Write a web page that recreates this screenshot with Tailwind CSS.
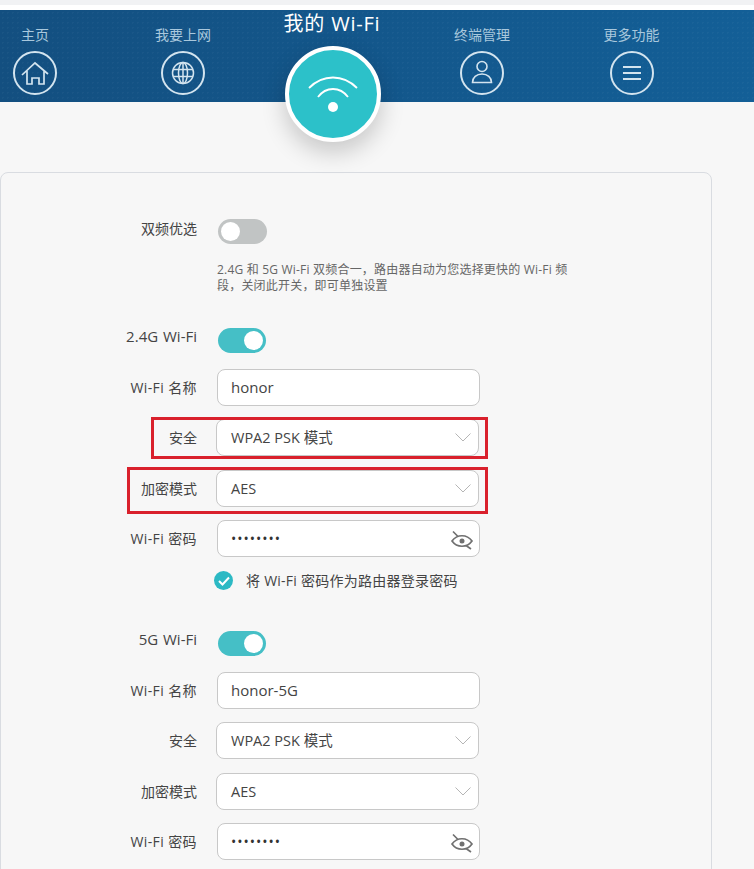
<!DOCTYPE html>
<html lang="zh-CN">
<head>
    <meta charset="UTF-8">
    <meta name="viewport" content="width=device-width, initial-scale=1.0">
    <title>我的 Wi-Fi</title>
    <script src="https://cdn.jsdelivr.net/npm/@tailwindcss/browser@4"></script>
</head>
<body class="bg-[#f7f7f7] h-[869px] overflow-hidden font-['Open_Sans','Noto_Sans_CJK_SC',sans-serif] text-[#333]">
    <div class="h-[5px] bg-[#f1f2f4]"></div>
    <div class="h-[5px] bg-white"></div>

    <!-- Top nav -->
    <header class="relative h-[92px] bg-gradient-to-r from-[#134f80] to-[#135f97]">
        <div class="absolute inset-0 bg-[radial-gradient(rgba(255,255,255,0.03)_1px,transparent_1px)] bg-[size:5px_5px]"></div>
        <nav class="relative flex -ml-[39px] text-[14px] text-[#a9c8dd]">
            <a class="w-[148px] flex flex-col items-center pt-[15px]">
                <span class="leading-[20px]">主页</span>
                <span class="mt-[6px] w-[44px] h-[44px] rounded-full border-2 border-[#d3e4ef] flex items-center justify-center">
                    <svg width="28" height="28" viewBox="0 0 28 28" fill="none" stroke="#d3e4ef" stroke-width="1.7"><path d="M1 16 14 4l13 11M6 12v13h5v-6h7v6h5V12"/></svg>
                </span>
            </a>
            <a class="w-[148px] flex flex-col items-center pt-[15px]">
                <span class="leading-[20px]">我要上网</span>
                <span class="mt-[6px] w-[44px] h-[44px] rounded-full border-2 border-[#d3e4ef] flex items-center justify-center">
                    <svg width="24" height="24" viewBox="0 0 24 24" fill="none" stroke="#d3e4ef" stroke-width="1.5"><circle cx="12" cy="12" r="10.5"/><ellipse cx="12" cy="12" rx="4.5" ry="10.5"/><path d="M12 1.500v21M2 8.500h20M2 15.500h20"/></svg>
                </span>
            </a>
            <a class="w-[150px] flex flex-col items-center">
                <span class="text-[20px] leading-[28px] text-white tracking-[0.8px]">我的 Wi-Fi</span>
            </a>
            <a class="w-[150px] flex flex-col items-center pt-[15px]">
                <span class="leading-[20px]">终端管理</span>
                <span class="mt-[6px] w-[44px] h-[44px] rounded-full border-2 border-[#d3e4ef] flex items-center justify-center">
                    <svg width="24" height="26" viewBox="0 0 24 26" fill="none" stroke="#d3e4ef" stroke-width="1.6"><circle cx="12" cy="6.500" r="5"/><path d="M2.500 22.500c0-5 4-8.500 9.500-8.500s9.500 3.500 9.500 8.500z"/></svg>
                </span>
            </a>
            <a class="w-[149px] flex flex-col items-center pt-[15px]">
                <span class="leading-[20px]">更多功能</span>
                <span class="mt-[6px] w-[44px] h-[44px] rounded-full border-2 border-[#d3e4ef] flex items-center justify-center">
                    <svg width="20" height="16" viewBox="0 0 20 16" fill="none" stroke="#d3e4ef" stroke-width="1.8"><path d="M1 2h18M1 8h18M1 14h18"/></svg>
                </span>
            </a>
        </nav>
        <!-- Active item circle hangs over the header edge -->
        <div class="absolute left-[285px] top-[36px] w-[96px] h-[96px] rounded-full bg-[#2cc1c9] border-[4px] border-white shadow-[0_10px_24px_rgba(0,0,0,0.2)] flex items-center justify-center">
            <svg width="52" height="40" viewBox="0 0 52 40" fill="none" stroke="white" stroke-width="1.8"><path d="M2 14C16 0 36 0 50 14M11 23c8-10.700 22-10.700 30 0"/><circle cx="26" cy="33" r="5" fill="white" stroke="none"/></svg>
        </div>
    </header>

    <!-- Settings card -->
    <main class="mt-[70px] w-[712px] h-[800px] border border-[#d9dce1] rounded-[8px] text-[14px] text-[#444]">
        <div class="relative pt-[46px]">
            <div class="flex items-start">
                <label class="w-[196px] text-right leading-[20px]">双频优选</label>
                <span class="ml-[21px] w-[49px] h-[25px] rounded-full bg-[#c1c4c4] p-[3px]"><span class="block w-[19px] h-[19px] rounded-full bg-white"></span></span>
            </div>
            <p class="ml-[216px] mt-[18px] w-[360px] text-[12px] leading-[16px] text-[#666] tracking-[0.2px]">2.4G 和 5G Wi-Fi 双频合一，路由器自动为您选择更快的 Wi-Fi 频段，关闭此开关，即可单独设置</p>

            <div class="flex items-start mt-[34px]">
                <label class="w-[196px] text-right leading-[16px] text-[15px] [word-spacing:1px]">2.4G Wi-Fi</label>
                <span class="ml-[21px] w-[48px] h-[25px] rounded-full bg-[#45bfc6] p-[3px] flex justify-end"><span class="block w-[19px] h-[19px] rounded-full bg-white"></span></span>
            </div>
            <div class="flex items-center mt-[16px]">
                <label class="w-[196px] text-right leading-[20px] tracking-[0.4px]">Wi-Fi 名称</label>
                <div class="ml-[20px] w-[263px] h-[37px] bg-white border border-[#c8c8c8] rounded-[8px] flex items-center px-[13px] text-[15px]">honor</div>
            </div>
            <div class="flex items-center mt-[13px]">
                <label class="w-[196px] text-right">安全</label>
                <div class="ml-[19px] w-[263px] h-[37px] bg-white border border-[#c8c8c8] rounded-[8px] flex items-center justify-between pl-[14px] pr-[7px] text-[14.5px]">WPA2 PSK 模式
                    <svg width="16" height="9" viewBox="0 0 16 9" fill="none" stroke="#b5b5b5"><path d="M.5.500 8 8 15.500.500"/></svg>
                </div>
            </div>
            <div class="flex items-center mt-[14px]">
                <label class="w-[196px] text-right">加密模式</label>
                <div class="ml-[19px] w-[263px] h-[37px] bg-white border border-[#c8c8c8] rounded-[8px] flex items-center justify-between pl-[14px] pr-[7px] text-[14.5px]">AES
                    <svg width="16" height="9" viewBox="0 0 16 9" fill="none" stroke="#b5b5b5"><path d="M.5.500 8 8 15.500.500"/></svg>
                </div>
            </div>
            <div class="flex items-center mt-[13px]">
                <label class="w-[196px] text-right leading-[20px] tracking-[0.4px]">Wi-Fi 密码</label>
                <div class="ml-[20px] w-[263px] h-[37px] bg-white border border-[#c8c8c8] rounded-[8px] flex items-center justify-between pl-[13px] pr-[6px]"><span class="tracking-[1px] text-[#333]">••••••••</span>
                    <svg class="mt-[3px]" width="22" height="20" viewBox="0 0 22 20" fill="none" stroke="#707070" stroke-width="1.7"><path d="M1 11c5-7 15-7 20 0-5 7-15 7-20 0zM2 1.500l4.500 4.500M15 15.500l5 3.500"/><circle cx="11" cy="11" r="2.500" fill="#707070" stroke="none"/></svg>
                </div>
            </div>
            <div class="flex items-center h-[19px] mt-[14px] ml-[213px]">
                <span class="w-[19px] h-[19px] rounded-full bg-[#2cb9c4] flex items-center justify-center">
                    <svg width="12" height="10" viewBox="0 0 12 10" fill="none" stroke="white" stroke-width="2"><path d="M1 5l3.500 3.500L11 1.500"/></svg>
                </span>
                <span class="ml-[13px] leading-[17px] tracking-[0.25px]">将 Wi-Fi 密码作为路由器登录密码</span>
            </div>

            <div class="flex items-start mt-[41px]">
                <label class="w-[196px] text-right leading-[16px] text-[15px] [word-spacing:1px]">5G Wi-Fi</label>
                <span class="ml-[21px] w-[48px] h-[25px] rounded-full bg-[#45bfc6] p-[3px] flex justify-end"><span class="block w-[19px] h-[19px] rounded-full bg-white"></span></span>
            </div>
            <div class="flex items-center mt-[16px]">
                <label class="w-[196px] text-right leading-[20px] tracking-[0.4px]">Wi-Fi 名称</label>
                <div class="ml-[20px] w-[263px] h-[37px] bg-white border border-[#c8c8c8] rounded-[8px] flex items-center px-[13px] text-[15px]">honor-5G</div>
            </div>
            <div class="flex items-center mt-[13px]">
                <label class="w-[196px] text-right">安全</label>
                <div class="ml-[19px] w-[263px] h-[37px] bg-white border border-[#c8c8c8] rounded-[8px] flex items-center justify-between pl-[14px] pr-[7px] text-[14.5px]">WPA2 PSK 模式
                    <svg width="16" height="9" viewBox="0 0 16 9" fill="none" stroke="#b5b5b5"><path d="M.5.500 8 8 15.500.500"/></svg>
                </div>
            </div>
            <div class="flex items-center mt-[14px]">
                <label class="w-[196px] text-right">加密模式</label>
                <div class="ml-[19px] w-[263px] h-[37px] bg-white border border-[#c8c8c8] rounded-[8px] flex items-center justify-between pl-[14px] pr-[7px] text-[14.5px]">AES
                    <svg width="16" height="9" viewBox="0 0 16 9" fill="none" stroke="#b5b5b5"><path d="M.5.500 8 8 15.500.500"/></svg>
                </div>
            </div>
            <div class="flex items-center mt-[13px]">
                <label class="w-[196px] text-right leading-[20px] tracking-[0.4px]">Wi-Fi 密码</label>
                <div class="ml-[20px] w-[263px] h-[37px] bg-white border border-[#c8c8c8] rounded-[8px] flex items-center justify-between pl-[13px] pr-[6px]"><span class="tracking-[1px] text-[#333]">••••••••</span>
                    <svg class="mt-[3px]" width="22" height="20" viewBox="0 0 22 20" fill="none" stroke="#707070" stroke-width="1.7"><path d="M1 11c5-7 15-7 20 0-5 7-15 7-20 0zM2 1.500l4.500 4.500M15 15.500l5 3.500"/><circle cx="11" cy="11" r="2.500" fill="#707070" stroke="none"/></svg>
                </div>
            </div>

            <!-- Red annotation boxes drawn over the form -->
            <div class="absolute left-[150px] top-[244px] w-[337px] h-[42px] border-[3px] border-[#d9202c]"></div>
            <div class="absolute left-[126px] top-[294px] w-[361px] h-[47px] border-[3px] border-[#d9202c]"></div>
        </div>
    </main>
</body>
</html>
